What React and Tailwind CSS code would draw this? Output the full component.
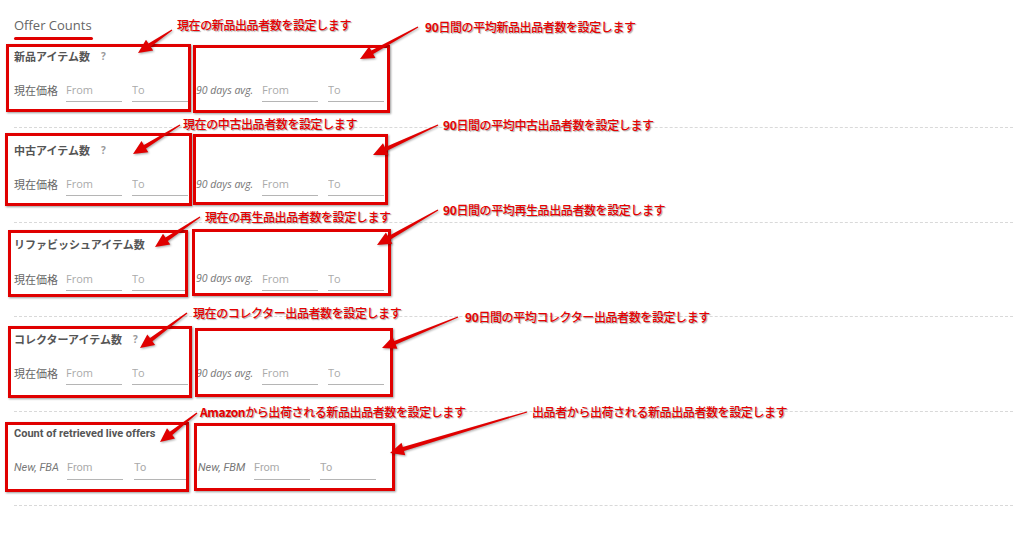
import React from "react";

const FONT = { fontFamily: '"Open Sans", "Noto Sans CJK JP", sans-serif' };
const JP = { fontFamily: '"Noto Sans CJK JP", sans-serif' };

function Field({ ph, className = "" }) {
  return (
    <input
      readOnly
      placeholder={ph}
      className={`h-[21px] border-b border-[#b5b5b5] bg-transparent pb-[3px] text-[11px] leading-[16px] text-[#666] outline-none placeholder:text-[#aaa] ${className}`}
    />
  );
}

function Row({ title, help, first }) {
  return (
    <div className={`border-b border-dashed border-[#d9d9d9] ${first ? "pt-[8px] pb-[25px]" : "pt-[14px] pb-[25.6px]"}`}>
      <div className="flex h-[16px] items-center text-[11px] font-bold text-[#555]" style={JP}>
        <span>{title}</span>
        {help && <span className="ml-[11px] text-[10px] text-[#999]" style={FONT}>?</span>}
      </div>
      <div className="mt-[17px] flex h-[21px] items-center">
        <span className="w-[52px] pb-[2px] text-[11px] text-[#666]" style={JP}>現在価格</span>
        <Field ph="From" className="w-[56px]" />
        <Field ph="To" className="ml-[10px] w-[56px]" />
        <span className="ml-[8px] w-[66px] pb-[2px] text-[10.5px] italic text-[#777]">90 days avg.</span>
        <Field ph="From" className="w-[56px]" />
        <Field ph="To" className="ml-[10px] w-[56px]" />
      </div>
    </div>
  );
}

function LiveRow() {
  return (
    <div className="border-b border-dashed border-[#d9d9d9] pb-[25.6px] pt-[14px]" style={{ fontFamily: 'Roboto, "Open Sans", sans-serif' }}>
      <div className="flex h-[16px] items-center text-[11px] font-bold text-[#555]">Count of retrieved live offers</div>
      <div className="mt-[17px] flex h-[21px] items-center">
        <span className="w-[53px] pb-[2px] text-[11px] italic text-[#777]">New, FBA</span>
        <Field ph="From" className="w-[56px]" />
        <Field ph="To" className="ml-[11px] w-[54px]" />
        <span className="ml-[10px] w-[56px] pb-[2px] text-[11px] italic text-[#777]">New, FBM</span>
        <Field ph="From" className="w-[56px]" />
        <Field ph="To" className="ml-[10px] w-[56px]" />
      </div>
    </div>
  );
}

const arrows = [
  [172, 30, 138, 53],
  [418, 27, 360, 59],
  [180, 125, 133, 154],
  [438, 125, 373, 155],
  [200, 217, 155, 247],
  [438, 210, 377, 245],
  [187, 313, 140, 348],
  [458, 317, 382, 348],
  [197, 413, 160, 442],
  [527, 412, 390, 453],
];

function arrowPoints([tx, ty, px, py]) {
  const dx = px - tx;
  const dy = py - ty;
  const len = Math.hypot(dx, dy);
  const ux = dx / len;
  const uy = dy / len;
  const nx = -uy;
  const ny = ux;
  const h = 14;
  const bx = px - ux * h;
  const by = py - uy * h;
  const pts = [
    [tx + nx * 0.6, ty + ny * 0.6],
    [bx + nx * 2, by + ny * 2],
    [bx + nx * 6.5, by + ny * 6.5],
    [px, py],
    [bx - nx * 6.5, by - ny * 6.5],
    [bx - nx * 2, by - ny * 2],
    [tx - nx * 0.6, ty - ny * 0.6],
  ];
  return pts.map((p) => p.map((v) => v.toFixed(1)).join(",")).join(" ");
}

const LBL = "absolute whitespace-nowrap text-[12px] font-medium leading-[18px] tracking-[-0.4px] text-[#e60000] [text-shadow:1px_1px_1px_rgba(0,0,0,0.35)]";
const BOX = "absolute border-[3px] border-[#e00000] shadow-[1px_1px_2px_rgba(0,0,0,0.4)]";

export default function App() {
  return (
    <div className="relative h-[537px] w-[1024px] overflow-hidden bg-white" style={FONT}>
      <div className="ml-[14px] w-[999px]">
        <div className="pt-[16px]">
          <div className="text-[13px] leading-[18px] text-[#666]">Offer Counts</div>
          <div className="mt-[3px] h-[3px] w-[79px] rounded-full bg-[#e00000]" />
        </div>
        <Row first title="新品アイテム数" help />
        <Row title="中古アイテム数" help />
        <Row title="リファビッシュアイテム数" />
        <Row title="コレクターアイテム数" help />
        <LiveRow />
      </div>

      {/* annotation boxes */}
      <div className={`${BOX} left-[6px] top-[44px] h-[68px] w-[185px]`} />
      <div className={`${BOX} left-[193px] top-[45px] h-[68px] w-[197px]`} />
      <div className={`${BOX} left-[5px] top-[133px] h-[73px] w-[187px]`} />
      <div className={`${BOX} left-[193px] top-[134px] h-[71px] w-[195px]`} />
      <div className={`${BOX} left-[8px] top-[230px] h-[67px] w-[180px]`} />
      <div className={`${BOX} left-[192px] top-[229px] h-[67px] w-[199px]`} />
      <div className={`${BOX} left-[8px] top-[326px] h-[72px] w-[184px]`} />
      <div className={`${BOX} left-[195px] top-[328px] h-[69px] w-[198px]`} />
      <div className={`${BOX} left-[5px] top-[422px] h-[70px] w-[184px]`} />
      <div className={`${BOX} left-[194px] top-[423px] h-[68px] w-[201px]`} />

      {/* arrows */}
      <svg className="pointer-events-none absolute left-0 top-0 h-[537px] w-[1024px] drop-shadow-[1px_1px_1px_rgba(0,0,0,0.35)]" viewBox="0 0 1024 537">
        {arrows.map((a, i) => (
          <polygon key={i} points={arrowPoints(a)} fill="#e00000" />
        ))}
      </svg>

      {/* annotation labels */}
      <div style={JP}>
        <span className={`${LBL} left-[177px] top-[16px]`}>現在の新品出品者数を設定します</span>
        <span className={`${LBL} left-[425px] top-[18px]`}><b>90</b>日間の平均新品出品者数を設定します</span>
        <span className={`${LBL} left-[183px] top-[115px]`}>現在の中古出品者数を設定します</span>
        <span className={`${LBL} left-[443px] top-[116px]`}><b>90</b>日間の平均中古出品者数を設定します</span>
        <span className={`${LBL} left-[205px] top-[208px]`}>現在の再生品出品者数を設定します</span>
        <span className={`${LBL} left-[443px] top-[201px]`}><b>90</b>日間の平均再生品出品者数を設定します</span>
        <span className={`${LBL} left-[193px] top-[304px]`}>現在のコレクター出品者数を設定します</span>
        <span className={`${LBL} left-[465px] top-[308px]`}><b>90</b>日間の平均コレクター出品者数を設定します</span>
        <span className={`${LBL} left-[200px] top-[403px]`}><b>Amazon</b>から出荷される新品出品者数を設定します</span>
        <span className={`${LBL} left-[532px] top-[403px]`}>出品者から出荷される新品出品者数を設定します</span>
      </div>
    </div>
  );
}
